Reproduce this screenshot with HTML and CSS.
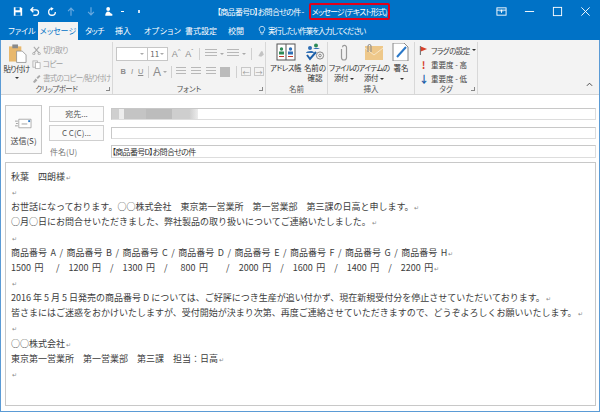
FILE: index.html
```html
<!DOCTYPE html>
<html lang="ja">
<head>
<meta charset="utf-8">
<title>メッセージ</title>
<link rel="stylesheet" href="styles.css">
</head>
<body>
<div class="window">
  <header class="titlebar">
    <div class="qat">
      <svg class="qi" viewBox="0 0 12 12"><path d="M1 1h8.500L11 2.500V11H1z" fill="#fff"/><rect x="3" y="1" width="5" height="3.500" fill="#0072c6"/><rect x="3" y="7" width="6" height="4" fill="#0072c6"/></svg>
      <svg class="qi" viewBox="0 0 12 12"><path d="M4 1L1 4l3 3M1.500 4H7a3.200 3.200 0 0 1 0 6.500H4" fill="none" stroke="#fff" stroke-width="1.600"/></svg>
      <svg class="qi" viewBox="0 0 12 12"><path d="M6 2.500a4 4 0 1 0 4 4" fill="none" stroke="#fff" stroke-width="1.600"/><path d="M4.500 .5L8 2.500 5 5z" fill="#fff"/></svg>
      <svg class="qi dim" viewBox="0 0 12 12"><path d="M6 11V2M2.500 5.500L6 2l3.500 3.500" fill="none" stroke="#6aaae0" stroke-width="1.400"/></svg>
      <svg class="qi dim" viewBox="0 0 12 12"><path d="M6 1v9M2.500 6.500L6 10l3.500-3.500" fill="none" stroke="#6aaae0" stroke-width="1.400"/></svg>
      <svg class="qi" viewBox="0 0 12 12"><circle cx="5" cy="3" r="2.300" fill="#fff"/><path d="M1.500 11c0-3 1.500-5 3.500-5 1.500 0 2 1 3 2l2 1v2z" fill="#fff"/></svg>
      <span class="qdash"></span>
      <span class="qdot"></span>
    </div>
    <div class="title">【商品番号D】お問合せの件 - <span class="redbox">メッセージ (テキスト形式)</span></div>
    <div class="winbtns">
      <svg class="wi" viewBox="0 0 12 12"><rect x="1" y="2" width="10" height="8" fill="none" stroke="#fff"/><path d="M1 4.500h10M6 4v3.500M4.500 6L6 4.500 7.500 6" fill="none" stroke="#fff"/></svg>
      <svg class="wi" viewBox="0 0 12 12"><path d="M1 6h10" stroke="#fff"/></svg>
      <svg class="wi" viewBox="0 0 12 12"><rect x="1.500" y="1.500" width="9" height="9" fill="none" stroke="#fff"/></svg>
      <svg class="wi" viewBox="0 0 12 12"><path d="M1.500 1.500l9 9M10.500 1.500l-9 9" stroke="#fff"/></svg>
    </div>
  </header>

  <nav class="tabs">
    <span class="tab t-file">ファイル</span>
    <span class="tab active">メッセージ</span>
    <span class="tab t-touch">タッチ</span>
    <span class="tab t-ins">挿入</span>
    <span class="tab t-opt">オプション</span>
    <span class="tab t-fmt">書式設定</span>
    <span class="tab t-rev">校閲</span>
    <svg class="bulb" viewBox="0 0 10 12"><path d="M5 .8a3.400 3.400 0 0 0-2 6.200v1.800h4V7a3.400 3.400 0 0 0-2-6.200zM3.500 10.500h3" fill="none" stroke="#fff" stroke-width=".9"/></svg>
    <span class="tab t-tell">実行したい作業を入力してください</span>
  </nav>

  <section class="ribbon">
    <div class="group g-clip">
      <div class="gbody clipbody">
        <div class="paste">
          <svg class="paste-ico" viewBox="0 0 19 20"><rect x="0" y="3" width="13" height="16" fill="#e8b86d"/><rect x="3.500" y="1" width="6" height="4" fill="#8a8a8a"/><path d="M8 8h6l4 4v8H8z" fill="#fff" stroke="#8a8a8a" stroke-width=".8"/></svg>
          <span class="ptext">貼り付け</span>
          <span class="caret dark"></span>
        </div>
        <ul class="cliplist">
          <li><svg class="s" viewBox="0 0 10 10"><path d="M2 1l6 7M8 1L2 8" stroke="#aaa" stroke-width="1.200"/><circle cx="2" cy="8.500" r="1.300" fill="none" stroke="#aaa"/><circle cx="8" cy="8.500" r="1.300" fill="none" stroke="#aaa"/></svg>切り取り</li>
          <li><svg class="s" viewBox="0 0 10 10"><rect x="1" y="1" width="5" height="7" fill="#eee" stroke="#aaa" stroke-width=".8"/><rect x="4" y="3" width="5" height="6.500" fill="#fff" stroke="#aaa" stroke-width=".8"/></svg>コピー</li>
          <li><svg class="s" viewBox="0 0 10 10"><path d="M1 9l3-4 2 2-3 3zM5 4l3-3 1.500 1.500-3 3z" fill="#aaa"/></svg>書式のコピー/貼り付け</li>
        </ul>
      </div>
      <div class="glabel tight">クリップボード<i class="launch"></i></div>
    </div>

    <div class="group g-font">
      <div class="gbody fontbody">
        <div class="frow">
          <span class="combo c1"><i class="caret"></i></span><span class="combo c2">11<i class="caret"></i></span>
          <span class="fbtn fa">A<sup>^</sup></span><span class="fbtn fa">A<sup>ˇ</sup></span>
          <span class="vsep"></span>
          <span class="lines ln"></span><i class="caret"></i>
          <span class="lines ln"></span><i class="caret"></i>
          <span class="vsep"></span>
          <svg class="s2" viewBox="0 0 12 12"><path d="M2 9l4-7h2l2 5-4 3z" fill="#c3c3c3"/></svg>
        </div>
        <div class="frow r2">
          <span class="fbtn b">B</span><span class="fbtn i">I</span><span class="fbtn u">U</span>
          <span class="vsep"></span>
          <span class="fbtn big">A</span><i class="caret"></i>
          <span class="vsep"></span>
          <span class="lines al"></span><span class="lines al ac"></span><span class="lines al ar"></span><span class="lines al tb"></span>
          <span class="vsep"></span>
          <span class="indent">←</span><span class="indent">→</span>
        </div>
      </div>
      <div class="glabel">フォント<i class="launch"></i></div>
    </div>

    <div class="group g-name">
      <div class="gbody big-row">
        <div class="bigbtn w-addr">
          <svg class="bi" viewBox="0 0 20 18"><rect x="1" y="1" width="18" height="16" fill="#fff" stroke="#555"/><path d="M10 1v16" stroke="#555"/><circle cx="5.500" cy="6" r="1.700" fill="#2e8b57"/><rect x="3" y="8.500" width="5" height="3" fill="#2e8b57"/><circle cx="14.500" cy="6" r="1.700" fill="#2f6fb5"/><rect x="12" y="8.500" width="5" height="3" fill="#2f6fb5"/><path d="M3 13.500h5M12 13.500h5" stroke="#c0392b"/></svg>
          <span>アドレス帳</span>
        </div>
        <div class="bigbtn w-check">
          <svg class="bi" viewBox="0 0 20 18"><circle cx="5" cy="5" r="2" fill="#2f6fb5"/><circle cx="11" cy="2.500" r="2" fill="#2e8b57"/><path d="M1 10c0-2 8-3 8 0zM8 6c1-1.500 6-1.500 7 0z" fill="#2f6fb5"/><path d="M2 12l3 4 6-7" fill="none" stroke="#1c5fa8" stroke-width="2"/><circle cx="15" cy="12.500" r="3.600" fill="none" stroke="#888"/><circle cx="15" cy="12.500" r="1.300" fill="none" stroke="#888"/></svg>
          <span>名前の<br>確認</span>
        </div>
      </div>
      <div class="glabel">名前</div>
    </div>

    <div class="group g-ins">
      <div class="gbody big-row">
        <div class="bigbtn w-file">
          <svg class="bi" viewBox="0 0 20 18"><path d="M7.500 5v8.500a2.500 2.500 0 0 0 5 0V3.500a2 2 0 0 0-4-.2" transform="translate(0 1)" fill="none" stroke="#999" stroke-width="1.200"/></svg>
          <span>ファイルの<br>添付<i class="caret dark inl"></i></span>
        </div>
        <div class="bigbtn w-item">
          <svg class="bi" viewBox="0 0 20 18"><rect x="1" y="3" width="18" height="14" fill="#eec88a"/><path d="M1 5l9 7 9-7" fill="none" stroke="#f8e6c6"/><path d="M4 9V3a1.500 1.500 0 0 1 3 0v6" fill="none" stroke="#888"/></svg>
          <span>アイテムの<br>添付<i class="caret dark inl"></i></span>
        </div>
        <div class="bigbtn w-sign">
          <svg class="bi" viewBox="0 0 20 18"><path d="M2 0h11l4 4v14H2z" fill="#fff" stroke="#888"/><path d="M6 14l9-10" stroke="#2a78c8" stroke-width="2"/></svg>
          <span>署名<br><i class="caret dark inl"></i></span>
        </div>
      </div>
      <div class="glabel">挿入</div>
    </div>

    <div class="group g-tag">
      <div class="gbody">
        <ul class="taglist">
          <li><svg class="s" viewBox="0 0 10 10"><path d="M1.500 0v10" stroke="#555"/><path d="M2 .5l7 2.800L2 6z" fill="#d6402b"/></svg><span class="flagtext">フラグの設定</span><i class="caret dark inl"></i></li>
          <li><span class="s mark">!</span>重要度 - 高</li>
          <li><span class="s mark low">↓</span>重要度 - 低</li>
        </ul>
      </div>
      <div class="glabel">タグ<i class="launch"></i></div>
    </div>
    <svg class="collapse" viewBox="0 0 8 5"><path d="M1 4l3-3 3 3" fill="none" stroke="#444" stroke-width="1.100"/></svg>
  </section>

  <main class="compose">
    <div class="fields">
      <div class="send">
        <svg class="send-ico" viewBox="0 0 18 11"><path d="M4 1h13v9H4z" fill="#fff" stroke="#999" stroke-width=".8"/><path d="M0 3h3M1 5.500h2M0 8h3M7 6h6" stroke="#888" stroke-width=".8"/><rect x="14" y="2" width="2" height="2" fill="#2a78c8"/></svg>
        <span>送信(S)</span>
      </div>
      <div class="addr">
        <span class="btn">宛先...</span><span class="inp"><span class="blur"></span></span>
        <span class="btn cc">C C(C)...</span><span class="inp"></span>
        <span class="subj-label">件名(U)</span><span class="inp subj">【商品番号D】お問合せの件</span>
      </div>
    </div>
    <article class="body">
<p>秋葉　四朗様<b>↵</b></p>
<p><b>↵</b></p>
<p>お世話になっております。○○株式会社　東京第一営業所　第一営業部　第三課の日高と申します。<b>↵</b></p>
<p>○月○日にお問合せいただきました、弊社製品の取り扱いについてご連絡いたしました。<b>↵</b></p>
<p><b>↵</b></p>
<p class="wide">商品番号 A / 商品番号 B / 商品番号 C / 商品番号 D / 商品番号 E / 商品番号 F / 商品番号 G / 商品番号 H<b>↵</b></p>
<p class="wide">1500 円　 /　1200 円　/　1300 円　/<span class="shift">　800 円</span>　　/　2000 円　/　1600 円　/　1400 円　/　2200 円<b>↵</b></p>
<p><b>↵</b></p>
<p>2016 年 5 月 5 日発売の商品番号 D については、ご好評につき生産が追い付かず、現在新規受付分を停止させていただいております。<b>↵</b></p>
<p>皆さまにはご迷惑をおかけいたしますが、受付開始が決まり次第、再度ご連絡させていただきますので、どうぞよろしくお願いいたします。<b>↵</b></p>
<p><b>↵</b></p>
<p>○○株式会社<b>↵</b></p>
<p>東京第一営業所　第一営業部　第三課　担当：日高<b>↵</b></p>
<p><b>↵</b></p>
    </article>
  </main>
</div>
</body>
</html>
```

FILE: styles.css
```css
* { box-sizing: border-box; }
html, body { margin: 0; padding: 0; }
body { width: 600px; height: 412px; overflow: hidden; font-family: "Noto Sans CJK JP", "Noto Sans", sans-serif; font-size: 9px; color: #444; background: #fff; }
ul { list-style: none; margin: 0; padding: 0; }
p { margin: 0; }
i { font-style: normal; }

.window { width: 600px; height: 412px; display: flex; flex-direction: column; border: 1px solid #5b9bd5; border-top: 0; }

.titlebar { height: 22px; background: #0072c6; display: flex; align-items: center; color: #fff; margin: 0 -1px; }
.qat { width: 217px; flex: none; display: flex; align-items: center; padding-left: 13px; gap: 7px; }
.qi { width: 10px; height: 11px; flex: none; }
.qi.dim { margin-left: 2px; margin-right: 1px; }
.qdash { width: 3px; height: 1px; background: #fff; }
.qdot { width: 2px; height: 3px; background: #cfe3f5; margin-left: 7px; }
.title { flex: 1; font-size: 8px; letter-spacing: -.7px; line-height: 16px; white-space: nowrap; font-feature-settings: "palt"; }
.redbox { display: inline-block; height: 17px; line-height: 13px; margin-left: 4px; padding: 0 1px; letter-spacing: -.9px; border: 2px solid #e2001a; border-radius: 2px; }
.winbtns { display: flex; gap: 17px; padding-right: 9px; }
.wi { width: 11px; height: 11px; }

.tabs { height: 18px; background: #0072c6; display: flex; align-items: stretch; color: #fff; margin: 0 -1px; white-space: nowrap; font-size: 8px; font-feature-settings: "palt"; }
.tab { line-height: 17px; }
.t-file { margin-left: 8px; width: 30px; }
.active { width: 40px; background: #f3f3f3; color: #0072c6; text-align: center; }
.t-touch { margin-left: 7px; width: 30px; letter-spacing: -.5px; }
.t-ins { width: 29px; }
.t-opt { width: 41px; letter-spacing: .4px; }
.t-fmt { width: 43px; }
.t-rev { width: 30px; }
.t-tell { font-size: 7.500px; letter-spacing: -.9px; }
.bulb { width: 8px; height: 11px; margin-top: 3px; margin-right: 2px; }

.ribbon { height: 55px; background: #f3f3f3; display: flex; border-bottom: 1px solid #d6d6d6; position: relative; color: #444; font-size: 7.500px; font-feature-settings: "palt"; }
.group { display: flex; flex-direction: column; height: 52px; margin-top: 2px; border-right: 1px solid #d8d8d8; flex: none; }
.gbody { height: 41px; flex: none; }
.glabel { height: 11px; line-height: 11px; text-align: center; font-size: 7.500px; color: #555; position: relative; }
.tight { letter-spacing: -.6px; }
.launch { position: absolute; right: 2px; top: 4px; width: 4px; height: 4px; border-right: 1px solid #888; border-bottom: 1px solid #888; }
.g-clip { width: 112px; }
.g-font { width: 153px; }
.g-name { width: 62px; }
.g-ins { width: 87px; }
.g-tag { width: 63px; }

.clipbody { display: flex; }
.paste { width: 31px; display: flex; flex-direction: column; align-items: center; color: #333; }
.paste-ico { width: 18px; height: 20px; margin-top: 1px; margin-left: 3px; }
.ptext { margin-top: 1px; line-height: 10px; white-space: nowrap; letter-spacing: -.6px; }
.caret { display: inline-block; width: 0; height: 0; border-left: 2px solid transparent; border-right: 2px solid transparent; border-top: 2px solid #aaa; flex: none; }
.caret.dark { border-top-color: #333; margin-top: 3px; }
.caret.inl { margin-top: 0; vertical-align: middle; margin-left: 2px; }
.cliplist { padding-top: 1px; }
.cliplist li { height: 14px; line-height: 14px; display: flex; align-items: center; color: #a0a0a0; white-space: nowrap; letter-spacing: -.7px; }
.s { width: 9px; height: 9px; margin-right: 2px; flex: none; }

.fontbody { padding: 4px 0 0 3px; }
.frow { display: flex; align-items: center; height: 15px; gap: 3px; }
.r2 { margin-top: 3px; padding-left: 2px; gap: 2px; }
.combo { height: 14px; background: #fff; border: 1px solid #c6c6c6; display: flex; align-items: center; justify-content: flex-end; position: relative; color: #666; font-size: 8px; }
.combo .caret { margin-right: 3px; }
.c1 { width: 39px; }
.c2 { width: 23px; margin-left: -3px; border-left: 0; justify-content: space-between; padding-left: 2px; }
.fbtn { color: #8c8c8c; width: 11px; text-align: center; line-height: 14px; font-family: "Liberation Sans", sans-serif; }
.fa { font-size: 9px; margin-left: 1px; }
.fa sup { font-size: 6px; line-height: 0; }
.b { font-weight: 700; width: 11px; margin-left: 2px; }
.i { font-style: italic; width: 11px; }
.u { text-decoration: underline; width: 11px; }
.big { font-size: 12px; width: 12px; }
.vsep { width: 1px; height: 12px; background: #d0d0d0; margin: 0 2px; flex: none; }
.lines { width: 12px; height: 9px; flex: none; background: repeating-linear-gradient(to bottom, #b8b8b8 0 1px, transparent 1px 3px); }
.al { width: 10px; margin-right: 2px; }
.ac { margin-left: 1px; }
.ar { margin-left: 1px; }
.tb { background: #bbb; height: 10px; }
.s2 { width: 10px; height: 10px; }
.indent { width: 10px; height: 9px; line-height: 8px; font-size: 7px; color: #999; text-align: center; border: 1px solid #c8c8c8; flex: none; margin-right: 1px; }

.big-row { display: flex; padding-top: 1px; }
.bigbtn { display: flex; flex-direction: column; align-items: center; text-align: center; line-height: 10px; white-space: nowrap; color: #333; flex: none; }
.bi { width: 20px; height: 18px; margin-bottom: 2px; flex: none; }
.w-addr { width: 35px; margin-left: 2px; letter-spacing: -.6px; }
.w-check { width: 24px; }
.w-file { width: 30px; margin-left: 1px; letter-spacing: -.6px; }
.w-item { width: 30px; letter-spacing: -.6px; }
.w-sign { width: 24px; }

.taglist { padding: 1px 0 0 4px; }
.taglist li { height: 14px; display: flex; align-items: center; white-space: nowrap; color: #444; }
.flagtext { letter-spacing: -.5px; }
.mark { font-size: 10px; line-height: 9px; color: #d6402b; font-weight: 700; text-align: center; }
.low { color: #1c5fa8; }
.taglist .s { margin-right: 3px; }
.collapse { position: absolute; right: 6px; bottom: 7px; width: 7px; height: 5px; }

.compose { flex: 1; min-height: 0; padding: 10px 3px 5px 4px; display: flex; flex-direction: column; gap: 4px; background: #fff; }
.fields { display: flex; height: 53px; }
.send { width: 37px; height: 49px; border: 1px solid #c8c8c8; background: #fbfbfb; display: flex; flex-direction: column; align-items: center; font-size: 8px; color: #444; padding-top: 12px; white-space: nowrap; flex: none; }
.send-ico { width: 17px; height: 11px; margin-bottom: 6px; flex: none; }
.addr { flex: 1; margin-left: 7px; display: grid; grid-template-columns: 55px 1fr; grid-template-rows: 17px 17px 17px; column-gap: 7px; row-gap: 2px; align-items: center; }
.btn { height: 16px; border: 1px solid #cfcfcf; background: #fbfbfb; text-align: center; line-height: 14px; font-size: 8px; color: #555; white-space: nowrap; }
.inp { height: 12px; border: 1px solid #c8c8c8; border-bottom-color: #ddd; border-right-color: #ddd; background: #fff; display: block; overflow: hidden; line-height: 11px; }
.blur { display: block; width: 86px; height: 10px; background: linear-gradient(to right, #cfcfcf 0 8%, #ececec 8% 14%, #c4c4c4 14% 40%, #bcbcbc 40% 70%, #cecece 70% 90%, #ececec); }
.subj-label { font-size: 8px; color: #777; padding-left: 1px; }
.subj { height: 13px; color: #333; font-size: 8px; letter-spacing: -.7px; white-space: nowrap; font-feature-settings: "palt"; }

.body { flex: 1; min-height: 0; border: 1px solid #c8c8c8; padding: 6px 0 0 5px; font-size: 9px; color: #3c3c3c; white-space: nowrap; overflow: hidden; }
.body p { height: 15.150px; line-height: 15.150px; }
.wide { word-spacing: 1.500px; }
.shift { margin-left: 4px; }
.body b { font-weight: 400; font-size: 6px; line-height: 0; color: #888; margin-left: 1px; }
```
